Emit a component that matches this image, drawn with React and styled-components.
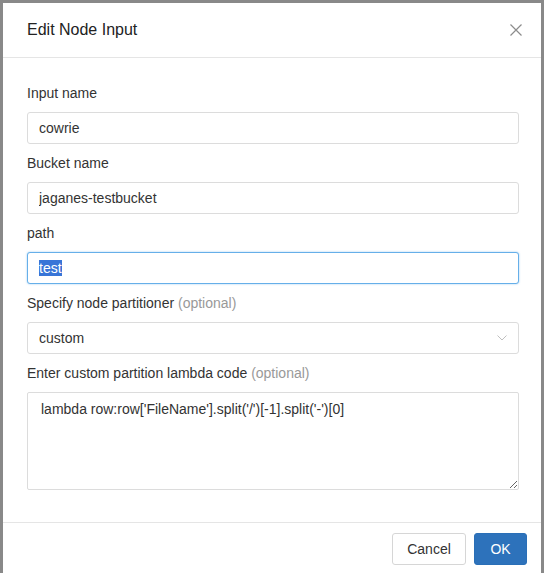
import React, { useEffect, useRef } from 'react';
import styled, { createGlobalStyle } from 'styled-components';

// # GLOBAL
const GlobalStyle = createGlobalStyle`
    html, body {
        margin: 0;
        padding: 0;
        background: #898989;
        height: 573px;
        overflow: hidden;
    }
    body {
        font-family: "Liberation Sans", Arial, sans-serif;
        color: #333;
    }
`;

// # STYLED
const Backdrop = styled.div`
    padding: 3px 3px 0 3px;
    width: 538px;
`;
const Modal = styled.div`
    background: #fff;
    width: 538px;
    display: flex;
    flex-direction: column;
`;
const Header = styled.div`
    height: 54px;
    border-bottom: 1px solid #e5e5e5;
    display: flex;
    align-items: center;
    justify-content: space-between;
    padding: 0 19px 0 24px;
`;
const Title = styled.h4`
    margin: 0;
    font-size: 16px;
    font-weight: normal;
    color: #222;
    line-height: 20px;
`;
const Close = styled.button`
    border: 0;
    background: none;
    padding: 0;
    width: 12px;
    height: 12px;
    display: flex;
    cursor: pointer;
`;
const Body = styled.div`
    padding: 25px 22px 32px 24px;
`;
const Group = styled.div`
    margin-bottom: ${props => props.last ? '0' : '9px'};
`;
const Label = styled.label`
    display: block;
    font-size: 14px;
    line-height: 20px;
    margin-bottom: 9px;
    color: #333;
`;
const Optional = styled.span`
    color: #999;
`;
const Input = styled.input`
    display: block;
    box-sizing: border-box;
    width: 100%;
    height: 32px;
    padding: 0 11px;
    font: inherit;
    font-size: 14px;
    color: #333;
    border: 1px solid ${props => props.focused ? '#66afe9' : '#dcdcdc'};
    border-radius: 3px;
    outline: none;
    box-shadow: ${props => props.focused ? '0 0 2px rgba(102,175,233,0.7)' : 'none'};
    &::selection {
        background: #3875d7;
        color: #fff;
    }
`;
const SelectBox = styled.div`
    box-sizing: border-box;
    height: 32px;
    padding: 0 11px 0 11px;
    border: 1px solid #dcdcdc;
    border-radius: 3px;
    display: flex;
    align-items: center;
    justify-content: space-between;
    font-size: 14px;
`;
const TextArea = styled.textarea`
    display: block;
    box-sizing: border-box;
    width: 100%;
    height: 98px;
    margin: 0;
    padding: 6px 13px;
    font: inherit;
    font-size: 14px;
    line-height: 20px;
    color: #333;
    border: 1px solid #dcdcdc;
    border-radius: 2px;
    outline: none;
    resize: vertical;
`;
const Footer = styled.div`
    border-top: 1px solid #e5e5e5;
    padding: 10px 14px;
    display: flex;
    justify-content: flex-end;
    gap: 8px;
`;
const Button = styled.button`
    height: 32px;
    width: ${props => props.width}px;
    font: inherit;
    font-size: 14px;
    border-radius: 3px;
    border: 1px solid ${props => props.primary ? '#2a6fb7' : '#d6d6d6'};
    background: ${props => props.primary ? '#2d72bb' : '#fff'};
    color: ${props => props.primary ? '#fff' : '#333'};
    cursor: pointer;
`;

// # COMPONENT
export default function App() {
    const pathRef = useRef(null);
    useEffect(() => {
        if (pathRef.current) {
            pathRef.current.focus();
            pathRef.current.select();
        }
    }, []);
    return (
        <>
            <GlobalStyle />
            <Backdrop>
                <Modal>
                    <Header>
                        <Title>Edit Node Input</Title>
                        <Close aria-label="close">
                            <svg width="12" height="12" viewBox="0 0 12 12">
                                <path d="M0.5 0.5 L11.5 11.5 M11.5 0.5 L0.5 11.5" stroke="#8c8c8c" strokeWidth="1.2" fill="none" />
                            </svg>
                        </Close>
                    </Header>
                    <Body>
                        <Group>
                            <Label>Input name</Label>
                            <Input defaultValue="cowrie" />
                        </Group>
                        <Group>
                            <Label>Bucket name</Label>
                            <Input defaultValue="jaganes-testbucket" />
                        </Group>
                        <Group>
                            <Label>path</Label>
                            <Input focused ref={pathRef} defaultValue="test" />
                        </Group>
                        <Group>
                            <Label>Specify node partitioner <Optional>(optional)</Optional></Label>
                            <SelectBox>
                                <span>custom</span>
                                <svg width="10" height="6" viewBox="0 0 10 6">
                                    <path d="M0.5 0.5 L5 5 L9.5 0.5" stroke="#bfbfbf" strokeWidth="1" fill="none" />
                                </svg>
                            </SelectBox>
                        </Group>
                        <Group last>
                            <Label>Enter custom partition lambda code <Optional>(optional)</Optional></Label>
                            <TextArea defaultValue={"lambda row:row['FileName'].split('/')[-1].split('-')[0]"} />
                        </Group>
                    </Body>
                    <Footer>
                        <Button width={74}>Cancel</Button>
                        <Button primary width={53}>OK</Button>
                    </Footer>
                </Modal>
            </Backdrop>
        </>
    );
}
